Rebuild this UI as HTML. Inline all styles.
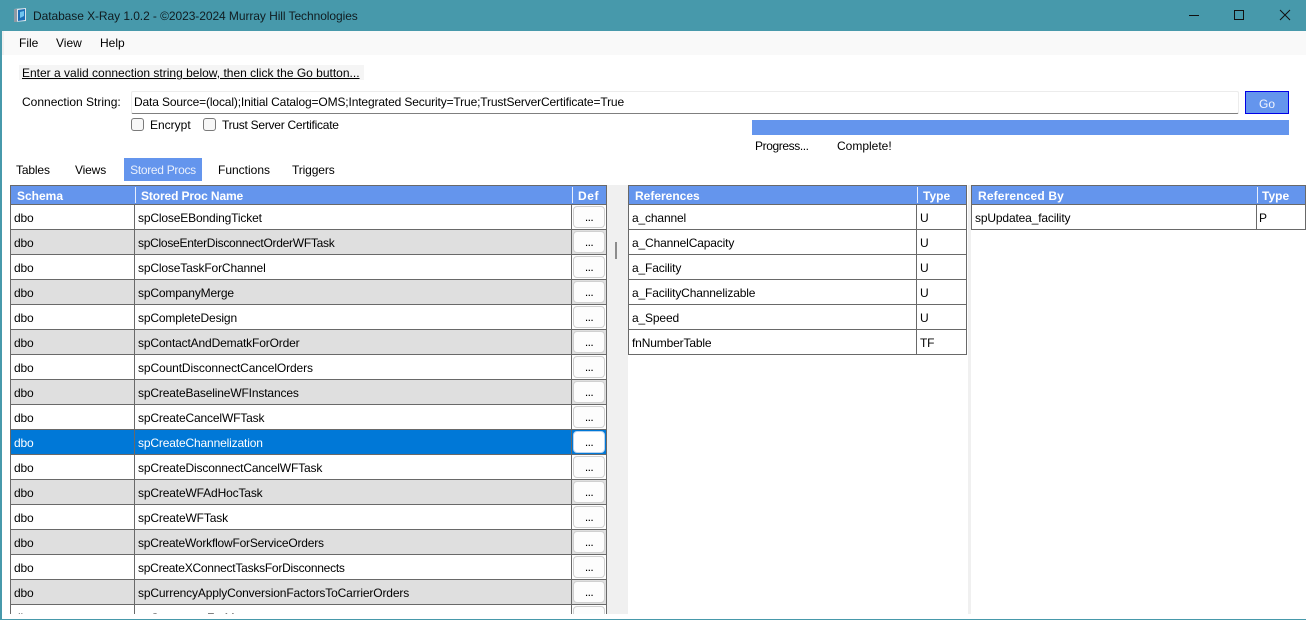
<!DOCTYPE html>
<html><head><meta charset="utf-8"><style>
html,body{margin:0;padding:0;width:1306px;height:620px;overflow:hidden;background:#fff}
body{position:relative;font:12px "Liberation Sans",sans-serif;color:#000}
.a{position:absolute;white-space:nowrap}
.grid{position:absolute;top:185px;height:429px;overflow:hidden;border-top:1px solid #696969;border-left:1px solid #696969;box-sizing:border-box}
.h{position:absolute;left:0;right:0;top:0;height:18px;background:#6495ed;color:#fff;font-weight:bold;line-height:20px}
.h span{position:absolute;top:0}
.h i{position:absolute;top:1px;width:1px;height:16px;background:#e8eefb}
.r{position:absolute;left:0;right:0;height:24px;border-top:1px solid #696969;line-height:26px}
.r span{position:absolute;top:0;letter-spacing:-.15px}
.r b{position:absolute;top:0;bottom:0;width:1px;background:#696969;font-weight:normal}
.g{background:#dfdfdf}
.s{background:#0078d7;color:#fff}
.btn{position:absolute;left:562px;top:1px;width:30px;height:20px;border:1px solid #d0d0d0;border-radius:4px;background:#fdfdfd;color:#000;text-align:center;line-height:21px;letter-spacing:-.6px}
.cb{position:absolute;width:11px;height:11px;border:1px solid #7a7a7a;border-radius:3px;background:#f7f7f7}
</style></head><body>
<div class="a" style="left:0;top:0;width:1306px;height:31px;background:#4799ab"></div>
<div class="a" style="left:33px;top:8px;font-size:12px;line-height:16px;letter-spacing:-.07px;color:#101c20">Database X-Ray 1.0.2 - ©2023-2024 Murray Hill Technologies</div>
<svg class="a" style="left:13px;top:7px" width="14" height="16" viewBox="0 0 14 16"><path d="M1 2L13 1V14L1 15Z" fill="#dfe6ec"/><path d="M5 3L12 2V13L5 14Z" fill="#1b6fb8"/><path d="M7 5L11 4V9L7 11Z" fill="#6fc4ee"/><path d="M1 2L4 2V15L1 15Z" fill="#8f9aa5"/></svg>
<svg class="a" style="left:1189px;top:9px" width="102" height="14" viewBox="0 0 102 14" fill="none" stroke="#111" stroke-width="1"><path d="M0 6.500H10"/><path d="M45.500 1.500H54.500V10.500H45.500Z"/><path d="M91 1L101 11M101 1L91 11"/></svg>
<div class="a" style="left:0;top:31px;width:1306px;height:24px;background:#f9f9f9"></div>
<div class="a" style="left:0;top:31px;width:4px;height:24px;background:#f0f0f0"></div>
<div class="a" style="left:0;top:31px;width:2px;height:589px;background:#4799ab"></div>
<div class="a" style="left:0;top:619px;width:1306px;height:1px;background:#4799ab"></div>
<div class="a" style="left:19px;top:36px;line-height:15px">File</div>
<div class="a" style="left:56px;top:36px;line-height:15px">View</div>
<div class="a" style="left:100px;top:36px;line-height:15px">Help</div>
<div class="a" style="left:19px;top:65px;width:345px;height:15px;background:#f5f5f5"></div>
<div class="a" style="left:22px;top:65px;line-height:16px;text-decoration:underline">Enter a valid connection string below, then click the Go button...</div>
<div class="a" style="left:22px;top:94px;line-height:16px">Connection String:</div>
<div class="a" style="left:131px;top:91px;width:1108px;height:23px;box-sizing:border-box;border:1px solid #ececec;border-bottom:1px solid #7f7f7f;background:#fff;border-radius:2px"></div>
<div class="a" style="left:134px;top:94px;line-height:16px;letter-spacing:-.14px">Data Source=(local);Initial Catalog=OMS;Integrated Security=True;TrustServerCertificate=True</div>
<div class="a" style="left:1245px;top:91px;width:44px;height:23px;box-sizing:border-box;border:1px solid #0000e6;background:#6495ed;color:#f2f5fd;text-align:center;line-height:24px">Go</div>
<div class="cb" style="left:131px;top:118px"></div>
<div class="a" style="left:150px;top:117px;line-height:16px">Encrypt</div>
<div class="cb" style="left:203px;top:118px"></div>
<div class="a" style="left:222px;top:117px;line-height:16px;letter-spacing:-.26px">Trust Server Certificate</div>
<div class="a" style="left:752px;top:120px;width:537px;height:15px;background:#6495ed"></div>
<div class="a" style="left:755px;top:138px;line-height:16px;letter-spacing:-.4px">Progress...</div>
<div class="a" style="left:837px;top:138px;line-height:16px">Complete!</div>
<div class="a" style="left:16px;top:162px;line-height:16px;letter-spacing:-.15px">Tables</div>
<div class="a" style="left:75px;top:162px;line-height:16px;letter-spacing:-.15px">Views</div>
<div class="a" style="left:124px;top:158px;width:78px;height:23px;background:#6495ed;color:#eaf0fc;text-align:center;line-height:24px;letter-spacing:-.3px">Stored Procs</div>
<div class="a" style="left:218px;top:162px;line-height:16px">Functions</div>
<div class="a" style="left:292px;top:162px;line-height:16px;letter-spacing:-.12px">Triggers</div>

<div class="a" style="left:607px;top:185px;width:21px;height:429px;background:#f0f0f0"></div>
<div class="a" style="left:615px;top:242px;width:2px;height:17px;background:#8c8c8c"></div>
<div class="a" style="left:968px;top:185px;width:3px;height:429px;background:#f0f0f0"></div>

<div class="grid" style="left:10px;width:597px;border-right:1px solid #696969">
<div class="h"><span style="left:6px">Schema</span><i style="left:124px"></i><span style="left:130px;letter-spacing:-.12px">Stored Proc Name</span><i style="left:561px"></i><span style="left:567px;letter-spacing:.6px">Def</span></div>
<div class="r" style="top:18px"><span style="left:3px">dbo</span><b style="left:123px"></b><span style="left:127px">spCloseEBondingTicket</span><b style="left:560px"></b><div class="btn">...</div></div>
<div class="r g" style="top:43px"><span style="left:3px">dbo</span><b style="left:123px"></b><span style="left:127px;letter-spacing:-.27px">spCloseEnterDisconnectOrderWFTask</span><b style="left:560px"></b><div class="btn">...</div></div>
<div class="r" style="top:68px"><span style="left:3px">dbo</span><b style="left:123px"></b><span style="left:127px">spCloseTaskForChannel</span><b style="left:560px"></b><div class="btn">...</div></div>
<div class="r g" style="top:93px"><span style="left:3px">dbo</span><b style="left:123px"></b><span style="left:127px">spCompanyMerge</span><b style="left:560px"></b><div class="btn">...</div></div>
<div class="r" style="top:118px"><span style="left:3px">dbo</span><b style="left:123px"></b><span style="left:127px">spCompleteDesign</span><b style="left:560px"></b><div class="btn">...</div></div>
<div class="r g" style="top:143px"><span style="left:3px">dbo</span><b style="left:123px"></b><span style="left:127px">spContactAndDematkForOrder</span><b style="left:560px"></b><div class="btn">...</div></div>
<div class="r" style="top:168px"><span style="left:3px">dbo</span><b style="left:123px"></b><span style="left:127px;letter-spacing:-.11px">spCountDisconnectCancelOrders</span><b style="left:560px"></b><div class="btn">...</div></div>
<div class="r g" style="top:193px"><span style="left:3px">dbo</span><b style="left:123px"></b><span style="left:127px">spCreateBaselineWFInstances</span><b style="left:560px"></b><div class="btn">...</div></div>
<div class="r" style="top:218px"><span style="left:3px">dbo</span><b style="left:123px"></b><span style="left:127px">spCreateCancelWFTask</span><b style="left:560px"></b><div class="btn">...</div></div>
<div class="r s" style="top:243px"><span style="left:3px">dbo</span><b style="left:123px"></b><span style="left:127px">spCreateChannelization</span><b style="left:560px"></b><div class="btn" style="background:#fff;border-color:#b9d3ee">...</div></div>
<div class="r" style="top:268px"><span style="left:3px">dbo</span><b style="left:123px"></b><span style="left:127px">spCreateDisconnectCancelWFTask</span><b style="left:560px"></b><div class="btn">...</div></div>
<div class="r g" style="top:293px"><span style="left:3px">dbo</span><b style="left:123px"></b><span style="left:127px">spCreateWFAdHocTask</span><b style="left:560px"></b><div class="btn">...</div></div>
<div class="r" style="top:318px"><span style="left:3px">dbo</span><b style="left:123px"></b><span style="left:127px">spCreateWFTask</span><b style="left:560px"></b><div class="btn">...</div></div>
<div class="r g" style="top:343px"><span style="left:3px">dbo</span><b style="left:123px"></b><span style="left:127px;letter-spacing:-.21px">spCreateWorkflowForServiceOrders</span><b style="left:560px"></b><div class="btn">...</div></div>
<div class="r" style="top:368px"><span style="left:3px">dbo</span><b style="left:123px"></b><span style="left:127px;letter-spacing:-.25px">spCreateXConnectTasksForDisconnects</span><b style="left:560px"></b><div class="btn">...</div></div>
<div class="r g" style="top:393px"><span style="left:3px">dbo</span><b style="left:123px"></b><span style="left:127px">spCurrencyApplyConversionFactorsToCarrierOrders</span><b style="left:560px"></b><div class="btn">...</div></div>
<div class="r" style="top:418px"><span style="left:3px">dbo</span><b style="left:123px"></b><span style="left:127px">spCustomersForMap</span><b style="left:560px"></b><div class="btn">...</div></div>
</div>

<div class="grid" style="left:628px;width:339px;height:170px;border-right:1px solid #696969;border-bottom:1px solid #696969">
<div class="h"><span style="left:6px">References</span><i style="left:288px"></i><span style="left:294px">Type</span></div>
<div class="r" style="top:18px"><span style="left:3px">a_channel</span><b style="left:287px"></b><span style="left:291px">U</span></div>
<div class="r" style="top:43px"><span style="left:3px">a_ChannelCapacity</span><b style="left:287px"></b><span style="left:291px">U</span></div>
<div class="r" style="top:68px"><span style="left:3px">a_Facility</span><b style="left:287px"></b><span style="left:291px">U</span></div>
<div class="r" style="top:93px"><span style="left:3px">a_FacilityChannelizable</span><b style="left:287px"></b><span style="left:291px">U</span></div>
<div class="r" style="top:118px"><span style="left:3px">a_Speed</span><b style="left:287px"></b><span style="left:291px">U</span></div>
<div class="r" style="top:143px"><span style="left:3px">fnNumberTable</span><b style="left:287px"></b><span style="left:291px">TF</span></div>
</div>

<div class="grid" style="left:971px;width:335px;height:45px;border-right:1px solid #696969;border-bottom:1px solid #696969">
<div class="h"><span style="left:6px;letter-spacing:.15px">Referenced By</span><i style="left:285px"></i><span style="left:290px">Type</span></div>
<div class="r" style="top:18px"><span style="left:3px">spUpdatea_facility</span><b style="left:284px"></b><span style="left:287px">P</span></div>
</div>
</body></html>
